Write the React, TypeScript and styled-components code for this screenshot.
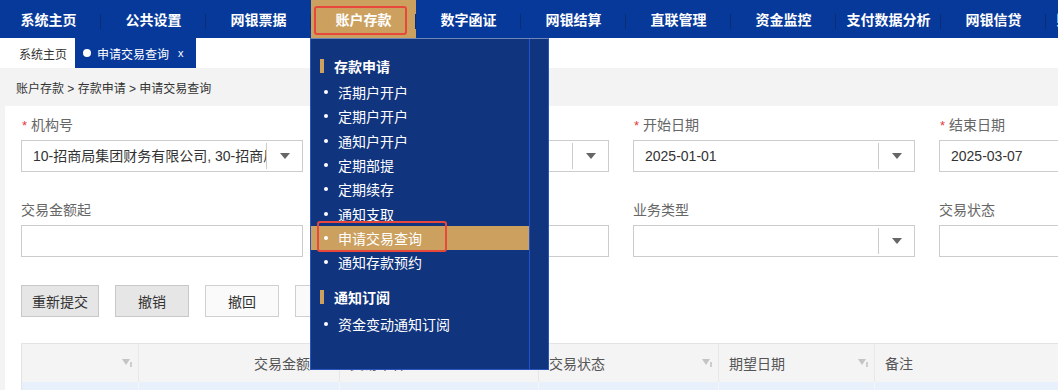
import React from "react";
import styled, { createGlobalStyle } from "styled-components";

const GlobalStyle = createGlobalStyle`
  html, body {
    margin: 0;
    padding: 0;
  }
  body {
    width: 1058px;
    height: 390px;
    overflow: hidden;
    background: #f3f3f3;
    font-family: "Liberation Sans", "Noto Sans CJK SC", sans-serif;
  }
  * {
    box-sizing: border-box;
  }
`;

const navItems = [
  "系统主页",
  "公共设置",
  "网银票据",
  "账户存款",
  "数字函证",
  "网银结算",
  "直联管理",
  "资金监控",
  "支付数据分析",
  "网银信贷",
  "账户信息查询",
];

const menuSections = [
  {
    title: "存款申请",
    items: [
      "活期户开户",
      "定期户开户",
      "通知户开户",
      "定期部提",
      "定期续存",
      "通知支取",
      "申请交易查询",
      "通知存款预约",
    ],
  },
  { title: "通知订阅", items: ["资金变动通知订阅"] },
];

interface IField {
  label: string;
  required?: boolean;
  value?: string;
  select?: boolean;
}

const fields: IField[] = [
  { label: "机构号", required: true, value: "10-招商局集团财务有限公司, 30-招商局集团", select: true },
  { label: "账户号", value: "", select: true },
  { label: "开始日期", required: true, value: "2025-01-01", select: true },
  { label: "结束日期", required: true, value: "2025-03-07", select: true },
  { label: "交易金额起" },
  { label: "交易金额止" },
  { label: "业务类型", select: true },
  { label: "交易状态", select: true },
];

const columns = [
  { title: "", width: 117 },
  { title: "交易金额", width: 201, right: true },
  { title: "交易币种", width: 199 },
  { title: "交易状态", width: 180 },
  { title: "期望日期", width: 156 },
  { title: "备注", width: 320, noIcon: true },
];

const FilterIcon = () => (
  <svg width="10" height="8" viewBox="0 0 10 8">
    <polygon points="0,0 8,0 4,6" fill="#c4c4c4" />
    <rect x="8.2" y="3" width="1.6" height="5" fill="#c4c4c4" />
  </svg>
);

const Arrow = () => (
  <svg width="10" height="6" viewBox="0 0 10 6">
    <polygon points="0,0 10,0 5,6" fill="#666" />
  </svg>
);

const App = () => {
  return (
    <Page>
      <GlobalStyle />
      <TopNav>
        {navItems.map((item) => (
          <NavItem key={item} $active={item === "账户存款"}>
            {item}
            {item === "账户存款" ? <NavMark /> : null}
          </NavItem>
        ))}
      </TopNav>

      <TabBar>
        <Tab>系统主页</Tab>
        <Tab $active>
          <Dot />
          申请交易查询
          <Close>x</Close>
        </Tab>
      </TabBar>

      <Crumb>账户存款 &gt; 存款申请 &gt; 申请交易查询</Crumb>

      <Panel>
        <FormGrid>
          {fields.map((f) => (
            <Field key={f.label}>
              <Label>
                {f.required ? <Star>*</Star> : null}
                {f.label}
              </Label>
              <Control>
                <Value>{f.value}</Value>
                {f.select ? (
                  <ArrowBox>
                    <Arrow />
                  </ArrowBox>
                ) : null}
              </Control>
            </Field>
          ))}
        </FormGrid>

        <Buttons>
          <Button $disabled>重新提交</Button>
          <Button $disabled>撤销</Button>
          <Button>撤回</Button>
          <Button>导出</Button>
        </Buttons>

        <Table>
          <HeadRow>
            {columns.map((c, i) => (
              <HeadCell key={i} $w={c.width} $right={c.right}>
                <span>{c.title}</span>
                {c.noIcon ? null : <FilterIcon />}
              </HeadCell>
            ))}
          </HeadRow>
          <BodyRow>
            {columns.map((c, i) => (
              <BodyCell key={i} $w={c.width} />
            ))}
          </BodyRow>
        </Table>
      </Panel>

      <Dropdown>
        <MenuBody>
          {menuSections.map((s) => (
            <Section key={s.title}>
              <SectionTitle>{s.title}</SectionTitle>
              {s.items.map((it) => (
                <MenuItem key={it} $active={it === "申请交易查询"}>
                  {it}
                  {it === "申请交易查询" ? <ItemMark /> : null}
                </MenuItem>
              ))}
            </Section>
          ))}
        </MenuBody>
        <ScrollStrip />
      </Dropdown>
    </Page>
  );
};

export default App;

const Page = styled.div`
  position: relative;
  width: 1058px;
  height: 390px;
  overflow: hidden;
  background: #f3f3f3;
`;

const TopNav = styled.nav`
  display: flex;
  height: 38px;
  margin-left: -4px;
  background: #07399a;
`;

const NavItem = styled.div<{ $active?: boolean }>`
  position: relative;
  flex: 0 0 105px;
  display: flex;
  align-items: center;
  justify-content: center;
  white-space: nowrap;
  font-size: 14px;
  font-weight: bold;
  color: #fff;
  background: ${(p) => (p.$active ? "#cca15f" : "transparent")};

  &::after {
    content: "";
    position: absolute;
    right: 0;
    top: 14px;
    width: 1px;
    height: 15px;
    background: #0b2d74;
  }
`;

const NavMark = styled.span`
  position: absolute;
  left: 3px;
  top: 6px;
  width: 93px;
  height: 29px;
  border: 2px solid #e8483c;
  border-radius: 3px;
`;

const TabBar = styled.div`
  display: flex;
  height: 30px;
  background: #fff;
`;

const Tab = styled.div<{ $active?: boolean }>`
  display: flex;
  align-items: center;
  font-size: 12px;
  color: ${(p) => (p.$active ? "#fff" : "#333")};
  background: ${(p) => (p.$active ? "#07399a" : "#fff")};
  padding: ${(p) => (p.$active ? "0 12px 0 8px" : "0 8px 0 19px")};
`;

const Dot = styled.span`
  width: 8px;
  height: 8px;
  border-radius: 50%;
  background: #fff;
  margin-right: 6px;
`;

const Close = styled.span`
  margin-left: 9px;
  font-size: 11px;
`;

const Crumb = styled.div`
  display: flex;
  align-items: center;
  height: 38px;
  padding-left: 16px;
  font-size: 12px;
  color: #333;
`;

const Panel = styled.div`
  margin-left: 5px;
  height: 284px;
  padding: 9px 0 0 16px;
  background: #fff;
`;

const FormGrid = styled.div`
  display: grid;
  grid-template-columns: repeat(4, 282px);
  column-gap: 24px;
  row-gap: 28px;
`;

const Field = styled.div`
  display: flex;
  flex-direction: column;
`;

const Label = styled.div`
  height: 20px;
  line-height: 20px;
  margin-bottom: 5px;
  font-size: 14px;
  color: #666;
  white-space: nowrap;
`;

const Star = styled.span`
  color: #e4393c;
  font-size: 13px;
  margin-right: 4px;
  margin-left: 1px;
`;

const Control = styled.div`
  display: flex;
  height: 32px;
  border: 1px solid #ccc;
  background: #fff;
`;

const Value = styled.div`
  flex: 1;
  min-width: 0;
  overflow: hidden;
  white-space: nowrap;
  padding-left: 11px;
  line-height: 30px;
  font-size: 14px;
  color: #333;
`;

const ArrowBox = styled.div`
  flex: 0 0 36px;
  display: flex;
  align-items: center;
  justify-content: center;
  margin: 2px 0;
  border-left: 1px solid #ccc;
`;

const Buttons = styled.div`
  display: flex;
  gap: 16px;
  margin-top: 28px;
`;

const Button = styled.button<{ $disabled?: boolean }>`
  height: 32px;
  min-width: 74px;
  padding: 0 10px;
  font-family: inherit;
  font-size: 14px;
  color: #333;
  background: ${(p) => (p.$disabled ? "#e6e6e6" : "#fafafa")};
  border: 1px solid ${(p) => (p.$disabled ? "#c8c8c8" : "#d0d0d0")};
  border-radius: 0;
`;

const Table = styled.div`
  margin-top: 26px;
  border-top: 1px solid #e4e4e4;
  border-left: 1px solid #e4e4e4;
`;

const HeadRow = styled.div`
  display: flex;
  height: 38px;
  background: #f4f4f4;
`;

const HeadCell = styled.div<{ $w: number; $right?: boolean }>`
  flex: 0 0 ${(p) => p.$w}px;
  display: flex;
  align-items: center;
  justify-content: ${(p) => (p.$right ? "flex-end" : "space-between")};
  padding: 0 6px 0 10px;
  border-right: 1px solid #e8e8e8;
  font-size: 14px;
  color: #555;

  span {
    margin-right: ${(p) => (p.$right ? "13px" : "0")};
  }
`;

const BodyRow = styled.div`
  display: flex;
  height: 36px;
  background: #e7f0fb;
`;

const BodyCell = styled.div<{ $w: number }>`
  flex: 0 0 ${(p) => p.$w}px;
  border-right: 1px solid #f3f7fc;
`;

const Dropdown = styled.div`
  position: absolute;
  left: 310px;
  top: 38px;
  width: 239px;
  height: 332px;
  display: flex;
  background: #11347e;
  border: 1px solid #2a55bf;
  border-top-color: #6d87bd;
`;

const MenuBody = styled.div`
  flex: 1;
  padding-top: 15px;
`;

const ScrollStrip = styled.div`
  flex: 0 0 19px;
  border-left: 1px solid #2152d0;
`;

const Section = styled.div`
  & + & {
    margin-top: 11px;
  }
`;

const SectionTitle = styled.div`
  display: flex;
  align-items: center;
  height: 24px;
  margin-bottom: 2px;
  padding-left: 9px;
  font-size: 14px;
  font-weight: bold;
  color: #fff;

  &::before {
    content: "";
    width: 4px;
    height: 14px;
    margin-right: 10px;
    background: #cca15f;
  }
`;

const MenuItem = styled.div<{ $active?: boolean }>`
  position: relative;
  display: flex;
  align-items: center;
  height: 24.3px;
  padding-left: 13px;
  font-size: 14px;
  color: #fff;
  background: ${(p) => (p.$active ? "#cca15f" : "transparent")};

  &::before {
    content: "";
    width: 4px;
    height: 4px;
    border-radius: 50%;
    margin-right: 10px;
    background: #fff;
  }
`;

const ItemMark = styled.span`
  position: absolute;
  left: 6px;
  top: -5px;
  width: 130px;
  height: 31px;
  border: 2px solid #e8483c;
  border-radius: 3px;
`;
